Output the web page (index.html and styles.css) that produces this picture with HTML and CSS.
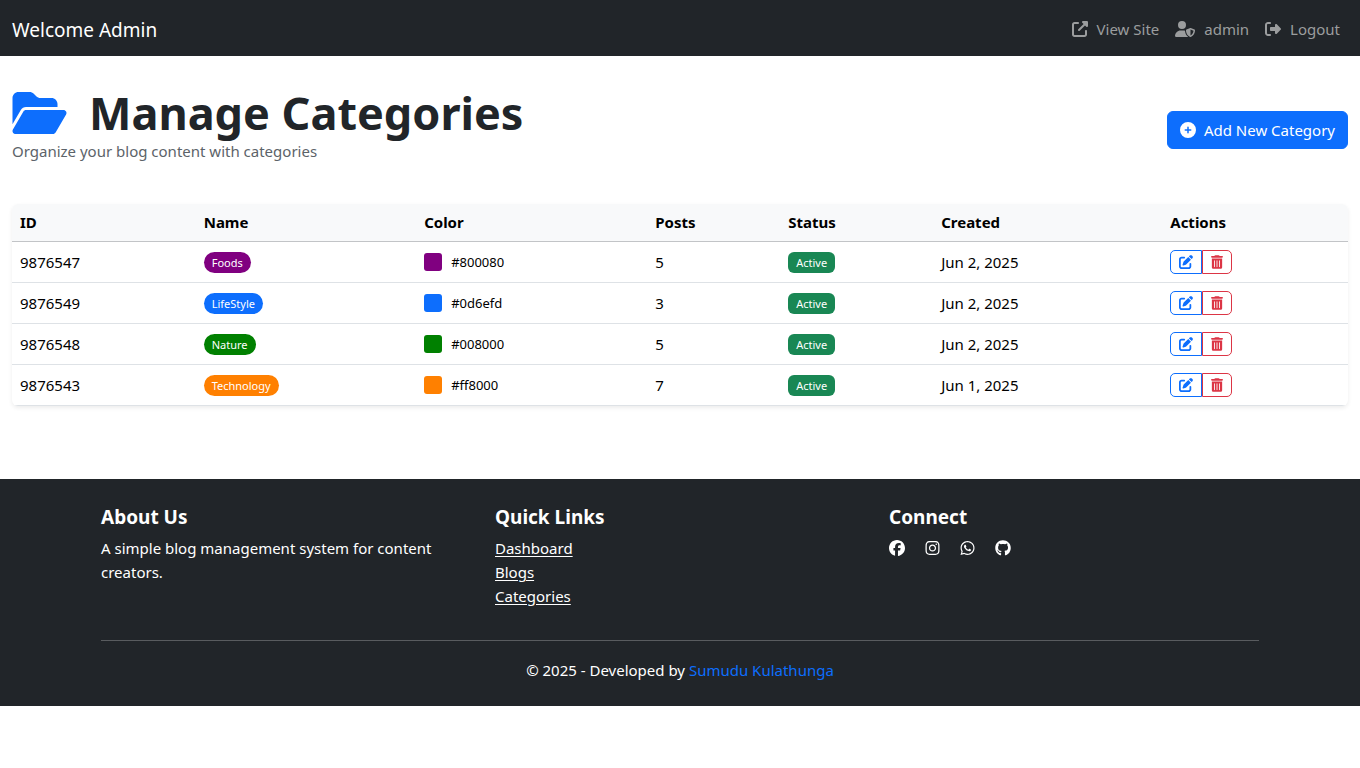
FILE: index.html
```html
<!DOCTYPE html>
<html lang="en">
<head>
<meta charset="utf-8">
<meta name="viewport" content="width=device-width, initial-scale=1">
<title>Manage Categories</title>
<link rel="stylesheet" href="styles.css">
</head>
<body>
<svg class="sprite" aria-hidden="true">
  <symbol id="i-folder" viewBox="0 0 576 512"><path d="M88.7 223.8L0 375.8V96C0 60.7 28.7 32 64 32H181.5c17 0 33.3 6.7 45.3 18.7l26.5 26.5c12 12 28.3 18.7 45.3 18.7H416c35.3 0 64 28.7 64 64v32H144c-22.8 0-43.8 12.1-55.3 31.8zm27.6 16.1C122.1 230 132.6 224 144 224H544c11.5 0 22 6.1 27.7 16.1s5.7 22.2-.1 32.1l-112 192C453.9 474 443.4 480 432 480H32c-11.5 0-22-6.1-27.7-16.1s-5.7-22.2 .1-32.1l112-192z"/></symbol>
  <symbol id="i-external" viewBox="0 0 512 512"><path d="M352 0c-12.9 0-24.6 7.8-29.6 19.8s-2.2 25.7 6.9 34.9L370.7 96 201.4 265.4c-12.5 12.5-12.5 32.8 0 45.3s32.8 12.5 45.3 0L416 141.3l41.4 41.4c9.2 9.2 22.9 11.9 34.9 6.9s19.8-16.6 19.8-29.6V32c0-17.7-14.3-32-32-32H352zM80 32C35.8 32 0 67.8 0 112V432c0 44.2 35.8 80 80 80H400c44.2 0 80-35.8 80-80V320c0-17.7-14.3-32-32-32s-32 14.3-32 32V432c0 8.8-7.2 16-16 16H80c-8.8 0-16-7.2-16-16V112c0-8.8 7.2-16 16-16H192c17.7 0 32-14.3 32-32s-14.3-32-32-32H80z"/></symbol>
  <symbol id="i-user" viewBox="0 0 640 512"><path d="M224 256A128 128 0 1 0 224 0a128 128 0 1 0 0 256zm-45.7 48C79.8 304 0 383.8 0 482.3C0 498.7 13.3 512 29.7 512H418.3c1.8 0 3.5-.2 5.3-.5c-76.3-55.1-99.8-141-103.1-200.2c-16.1-4.8-33.1-7.3-50.7-7.3H178.3zm308.8-78.3l-120 48C358 277.4 352 286.2 352 296c0 63.3 25.9 168.8 134.8 214.2c5.9 2.5 12.6 2.5 18.5 0C614.1 464.8 640 359.3 640 296c0-9.8-6-18.6-15.1-22.3l-120-48c-5.7-2.3-12.1-2.3-17.8 0zM591.4 312c-3.9 50.7-27.2 116.7-95.4 149.7V273.8L591.4 312z"/></symbol>
  <symbol id="i-logout" viewBox="0 0 512 512"><path d="M377.9 105.9L500.7 228.7c7.2 7.2 11.3 17.1 11.3 27.3s-4.1 20.1-11.3 27.3L377.9 406.1c-6.4 6.4-15 9.9-24 9.9c-18.7 0-33.9-15.2-33.9-33.9l0-62.1-128 0c-17.7 0-32-14.3-32-32l0-64c0-17.7 14.3-32 32-32l128 0 0-62.1c0-18.7 15.2-33.9 33.9-33.9c9 0 17.6 3.6 24 9.9zM160 96L96 96c-17.7 0-32 14.3-32 32l0 256c0 17.7 14.3 32 32 32l64 0c17.7 0 32 14.3 32 32s-14.3 32-32 32l-64 0c-53 0-96-43-96-96L0 128C0 75 43 32 96 32l64 0c17.7 0 32 14.3 32 32s-14.3 32-32 32z"/></symbol>
  <symbol id="i-plus" viewBox="0 0 512 512"><path d="M256 512A256 256 0 1 0 256 0a256 256 0 1 0 0 512zM232 344V280H168c-13.3 0-24-10.7-24-24s10.7-24 24-24h64V168c0-13.3 10.7-24 24-24s24 10.7 24 24v64h64c13.3 0 24 10.7 24 24s-10.7 24-24 24H280v64c0 13.3-10.7 24-24 24s-24-10.7-24-24z"/></symbol>
  <symbol id="i-edit" viewBox="0 0 512 512"><path d="M471.6 21.7c-21.9-21.9-57.3-21.9-79.2 0L362.3 51.7l97.9 97.9 30.1-30.1c21.9-21.9 21.9-57.3 0-79.2L471.6 21.7zm-299.2 220c-6.1 6.1-10.8 13.6-13.5 21.9l-29.6 88.8c-2.9 8.6-.6 18.1 5.8 24.6s15.9 8.7 24.6 5.8l88.8-29.6c8.2-2.7 15.7-7.4 21.9-13.5L437.7 172.3 339.7 74.3 172.4 241.7zM96 64C43 64 0 107 0 160V416c0 53 43 96 96 96H352c53 0 96-43 96-96V320c0-17.7-14.3-32-32-32s-32 14.3-32 32v96c0 17.7-14.3 32-32 32H96c-17.7 0-32-14.3-32-32V160c0-17.7 14.3-32 32-32h96c17.7 0 32-14.3 32-32s-14.3-32-32-32H96z"/></symbol>
  <symbol id="i-trash" viewBox="0 0 448 512"><path d="M135.2 17.7C140.6 6.8 151.7 0 163.8 0H284.2c12.1 0 23.2 6.8 28.6 17.7L320 32h96c17.7 0 32 14.3 32 32s-14.3 32-32 32H32C14.3 96 0 81.7 0 64S14.3 32 32 32h96l7.2-14.3zM32 128H416V448c0 35.3-28.7 64-64 64H96c-35.3 0-64-28.7-64-64V128zm96 64c-8.8 0-16 7.2-16 16V432c0 8.8 7.2 16 16 16s16-7.2 16-16V208c0-8.8-7.2-16-16-16zm96 0c-8.8 0-16 7.2-16 16V432c0 8.8 7.2 16 16 16s16-7.2 16-16V208c0-8.8-7.2-16-16-16zm96 0c-8.8 0-16 7.2-16 16V432c0 8.8 7.2 16 16 16s16-7.2 16-16V208c0-8.8-7.2-16-16-16z"/></symbol>
  <symbol id="i-facebook" viewBox="0 0 512 512"><path d="M512 256C512 114.6 397.4 0 256 0S0 114.6 0 256C0 376 82.7 476.8 194.2 504.5V334.2H141.4V256h52.8V222.3c0-87.1 39.4-127.5 125-127.5c16.2 0 44.2 3.2 55.7 6.4V172c-6-.6-16.5-1-29.6-1c-42 0-58.2 15.9-58.2 57.2V256h83.6l-14.4 78.2H287V510.1C413.8 494.8 512 386.9 512 256z"/></symbol>
  <symbol id="i-instagram" viewBox="0 0 448 512"><path d="M224.1 141c-63.6 0-114.9 51.3-114.9 114.9s51.3 114.9 114.9 114.9S339 319.5 339 255.9 287.7 141 224.1 141zm0 189.6c-41.1 0-74.7-33.5-74.7-74.7s33.5-74.7 74.7-74.7 74.7 33.5 74.7 74.7-33.6 74.7-74.7 74.7zm146.4-194.3c0 14.9-12 26.8-26.8 26.8-14.9 0-26.8-12-26.8-26.8s12-26.8 26.8-26.8 26.8 12 26.8 26.8zm76.1 27.2c-1.7-35.9-9.9-67.7-36.2-93.9-26.2-26.2-58-34.4-93.9-36.2-37-2.1-147.9-2.1-184.9 0-35.8 1.7-67.6 9.9-93.9 36.1s-34.4 58-36.2 93.9c-2.1 37-2.1 147.9 0 184.9 1.7 35.9 9.9 67.7 36.2 93.9s58 34.4 93.9 36.2c37 2.1 147.9 2.1 184.9 0 35.9-1.7 67.7-9.9 93.9-36.2 26.2-26.2 34.4-58 36.2-93.9 2.1-37 2.1-147.8 0-184.8zM398.8 388c-7.8 19.6-22.9 34.7-42.6 42.6-29.5 11.7-99.5 9-132.1 9s-102.7 2.6-132.1-9c-19.6-7.8-34.7-22.9-42.6-42.6-11.7-29.5-9-99.5-9-132.1s-2.6-102.7 9-132.1c7.8-19.6 22.9-34.7 42.6-42.6 29.5-11.7 99.5-9 132.1-9s102.7-2.6 132.1 9c19.6 7.8 34.7 22.9 42.6 42.6 11.7 29.5 9 99.5 9 132.1s2.7 102.7-9 132.1z"/></symbol>
  <symbol id="i-whatsapp" viewBox="0 0 448 512"><path d="M380.9 97.1C339 55.1 283.2 32 223.9 32c-122.4 0-222 99.6-222 222 0 39.1 10.2 77.3 29.6 111L0 480l117.7-30.9c32.4 17.7 68.9 27 106.1 27h.1c122.3 0 224.1-99.6 224.1-222 0-59.3-25.2-115-67.1-157zm-157 341.6c-33.2 0-65.7-8.9-94-25.7l-6.7-4-69.8 18.3L72 359.2l-4.4-7c-18.5-29.4-28.2-63.3-28.2-98.2 0-101.7 82.8-184.5 184.6-184.5 49.3 0 95.6 19.2 130.4 54.1 34.8 34.9 56.2 81.2 56.1 130.5 0 101.8-84.9 184.6-186.6 184.6zm101.2-138.2c-5.5-2.8-32.8-16.2-37.9-18-5.1-1.9-8.8-2.8-12.5 2.8-3.7 5.6-14.3 18-17.6 21.8-3.2 3.7-6.5 4.2-12 1.4-32.6-16.3-54-29.1-75.5-66-5.7-9.8 5.7-9.1 16.3-30.3 1.8-3.7.9-6.9-.5-9.7-1.4-2.8-12.5-30.1-17.1-41.2-4.5-10.8-9.1-9.3-12.5-9.5-3.2-.2-6.9-.2-10.6-.2-3.7 0-9.7 1.4-14.8 6.9-5.1 5.6-19.4 19-19.4 46.3 0 27.3 19.9 53.7 22.6 57.4 2.8 3.7 39.1 59.7 94.8 83.8 35.2 15.2 49 16.5 66.6 13.9 10.7-1.6 32.8-13.4 37.4-26.4 4.6-13 4.6-24.1 3.2-26.4-1.3-2.5-5-3.9-10.5-6.6z"/></symbol>
  <symbol id="i-github" viewBox="0 0 496 512"><path d="M244.8 8C106.1 8 0 113.3 0 252c0 110.9 69.8 205.8 169.5 239.2 12.8 2.3 17.3-5.6 17.3-12.1 0-6.2-.3-40.4-.3-61.4 0 0-70 15-84.7-29.8 0 0-11.4-29.1-27.8-36.6 0 0-22.9-15.7 1.6-15.4 0 0 24.9 2 38.6 25.8 21.9 38.6 58.6 27.5 72.9 20.9 2.3-16 8.8-27.1 16-33.7-55.9-6.2-112.3-14.3-112.3-110.5 0-27.5 7.6-41.3 23.6-58.9-2.6-6.5-11.1-33.3 2.6-67.9 20.9-6.5 69 27 69 27 20-5.6 41.5-8.5 62.8-8.5s42.8 2.9 62.8 8.5c0 0 48.1-33.6 69-27 13.7 34.7 5.2 61.4 2.6 67.9 16 17.7 25.8 31.5 25.8 58.9 0 96.5-58.9 104.2-114.8 110.5 9.2 7.9 17 22.9 17 46.4 0 33.7-.3 75.4-.3 83.6 0 6.5 4.6 14.4 17.3 12.1C428.2 457.8 496 362.9 496 252 496 113.3 383.5 8 244.8 8z"/></symbol>
</svg>

<header class="navbar">
  <a class="brand" href="#">Welcome Admin</a>
  <nav class="nav">
    <a class="nav-link" href="#"><svg class="icon"><use href="#i-external"/></svg>View Site</a>
    <a class="nav-link" href="#"><svg class="icon icon-wide"><use href="#i-user"/></svg>admin</a>
    <a class="nav-link" href="#"><svg class="icon"><use href="#i-logout"/></svg>Logout</a>
  </nav>
</header>

<main class="main">
  <div class="page-head">
    <div class="heading">
      <h1 class="title"><svg class="title-icon"><use href="#i-folder"/></svg>Manage Categories</h1>
      <p class="subtitle">Organize your blog content with categories</p>
    </div>
    <button class="btn-primary" type="button"><svg class="icon"><use href="#i-plus"/></svg>Add New Category</button>
  </div>

  <table class="table">
    <colgroup><col class="c-id"><col class="c-name"><col class="c-color"><col class="c-posts"><col class="c-status"><col class="c-created"><col class="c-actions"></colgroup>
    <thead>
      <tr><th scope="col">ID</th><th scope="col">Name</th><th scope="col">Color</th><th scope="col">Posts</th><th scope="col">Status</th><th scope="col">Created</th><th scope="col">Actions</th></tr>
    </thead>
    <tbody>
      <tr class="purple">
        <td>9876547</td><td><span class="badge pill">Foods</span></td>
        <td><div class="color"><span class="swatch"></span>#800080</div></td>
        <td>5</td><td><span class="badge status">Active</span></td><td>Jun 2, 2025</td>
        <td><div class="group"><button class="act edit" type="button" aria-label="Edit Foods"><svg class="icon-sm"><use href="#i-edit"/></svg></button><button class="act delete" type="button" aria-label="Delete Foods"><svg class="icon-sm icon-thin"><use href="#i-trash"/></svg></button></div></td>
      </tr>
      <tr class="blue">
        <td>9876549</td><td><span class="badge pill">LifeStyle</span></td>
        <td><div class="color"><span class="swatch"></span>#0d6efd</div></td>
        <td>3</td><td><span class="badge status">Active</span></td><td>Jun 2, 2025</td>
        <td><div class="group"><button class="act edit" type="button" aria-label="Edit LifeStyle"><svg class="icon-sm"><use href="#i-edit"/></svg></button><button class="act delete" type="button" aria-label="Delete LifeStyle"><svg class="icon-sm icon-thin"><use href="#i-trash"/></svg></button></div></td>
      </tr>
      <tr class="green">
        <td>9876548</td><td><span class="badge pill">Nature</span></td>
        <td><div class="color"><span class="swatch"></span>#008000</div></td>
        <td>5</td><td><span class="badge status">Active</span></td><td>Jun 2, 2025</td>
        <td><div class="group"><button class="act edit" type="button" aria-label="Edit Nature"><svg class="icon-sm"><use href="#i-edit"/></svg></button><button class="act delete" type="button" aria-label="Delete Nature"><svg class="icon-sm icon-thin"><use href="#i-trash"/></svg></button></div></td>
      </tr>
      <tr class="orange">
        <td>9876543</td><td><span class="badge pill">Technology</span></td>
        <td><div class="color"><span class="swatch"></span>#ff8000</div></td>
        <td>7</td><td><span class="badge status">Active</span></td><td>Jun 1, 2025</td>
        <td><div class="group"><button class="act edit" type="button" aria-label="Edit Technology"><svg class="icon-sm"><use href="#i-edit"/></svg></button><button class="act delete" type="button" aria-label="Delete Technology"><svg class="icon-sm icon-thin"><use href="#i-trash"/></svg></button></div></td>
      </tr>
    </tbody>
  </table>
</main>

<footer class="footer">
  <div class="footer-inner">
    <div class="footer-cols">
      <section>
        <h2 class="footer-title">About Us</h2>
        <p class="about">A simple blog management system for content creators.</p>
      </section>
      <section>
        <h2 class="footer-title">Quick Links</h2>
        <ul class="links">
          <li><a href="#">Dashboard</a></li>
          <li><a href="#">Blogs</a></li>
          <li><a href="#">Categories</a></li>
        </ul>
      </section>
      <section>
        <h2 class="footer-title">Connect</h2>
        <div class="social">
          <a href="#" aria-label="Facebook"><svg class="icon"><use href="#i-facebook"/></svg></a>
          <a href="#" aria-label="Instagram"><svg class="icon icon-thin"><use href="#i-instagram"/></svg></a>
          <a href="#" aria-label="WhatsApp"><svg class="icon icon-thin"><use href="#i-whatsapp"/></svg></a>
          <a href="#" aria-label="GitHub"><svg class="icon"><use href="#i-github"/></svg></a>
        </div>
      </section>
    </div>
    <p class="copyright">© 2025 - Developed by <a href="#">Sumudu Kulathunga</a></p>
  </div>
</footer>
</body>
</html>
```
FILE: styles.css
```css
* { box-sizing: border-box; }

body {
  margin: 0;
  background: #fff;
  color: #212529;
  font-family: "Segoe UI", "Noto Sans", "Open Sans", sans-serif;
  font-size: 15px;
  line-height: 24px;
}

h1, h2, p, ul { margin: 0; }

button { font: inherit; cursor: pointer; }

.sprite { position: absolute; width: 0; height: 0; }

.icon, .icon-sm, .title-icon { fill: currentColor; flex: none; }
.icon { width: 16px; height: 16px; }
.icon-wide { width: 20px; }
.icon-sm { width: 14px; height: 14px; }
.icon.icon-thin { width: 15px; }
.icon-sm.icon-thin { width: 12px; }

.navbar {
  display: flex;
  align-items: center;
  justify-content: space-between;
  min-height: 56px;
  padding: 2px 20px 0 12px;
  background: #212529;
}
.brand { padding-top: 2px; color: #fff; font-size: 19px; text-decoration: none; }
.nav { display: flex; gap: 16px; }
.nav-link {
  display: flex;
  align-items: center;
  gap: 9px;
  color: #9b9d9e;
  text-decoration: none;
}

.main { padding: 24px 12px 73px; }

.page-head {
  display: flex;
  align-items: center;
  justify-content: space-between;
  min-height: 100px;
  margin-bottom: 24px;
}
.heading { padding: 6px 0 17px; }
.title {
  display: flex;
  align-items: center;
  gap: 22px;
  font-size: 45px;
  font-weight: 700;
  line-height: 53px;
}
.title-icon { width: 55px; height: 48px; color: #0d6efd; }
.subtitle { color: #5c6369; }

.btn-primary {
  display: flex;
  align-items: center;
  gap: 8px;
  padding: 6px 12px;
  border: 1px solid #0d6efd;
  border-radius: 6px;
  background: #0d6efd;
  color: #fff;
}

.table {
  width: 100%;
  table-layout: fixed;
  border-spacing: 0;
  border-radius: 6px;
  overflow: hidden;
  color: #000;
  box-shadow: 0 2px 4px rgba(0, 0, 0, .075);
}
.c-id { width: 13.75%; }
.c-name { width: 16.5%; }
.c-color { width: 17.3%; }
.c-posts { width: 9.95%; }
.c-status { width: 11.45%; }
.c-created { width: 17.15%; }
.c-actions { width: 13.9%; }
.table th {
  padding: 6px 8px 7px;
  border-bottom: 1px solid #c2c4c7;
  background: #f8f9fa;
  font-weight: 700;
  text-align: left;
}
.table td {
  padding: 8px;
  border-bottom: 1px solid #dee2e6;
  vertical-align: middle;
}

.purple { --tag: #800080; }
.blue { --tag: #0d6efd; }
.green { --tag: #008000; }
.orange { --tag: #ff8000; }

.badge {
  display: block;
  width: fit-content;
  padding: 0 8px;
  color: #fff;
  font-size: 11px;
  line-height: 21px;
}
.pill { border-radius: 11px; background: var(--tag); }
.status { border-radius: 6px; background: #198754; }

.color { display: flex; align-items: center; gap: 9px; font-size: 13px; }
.swatch { width: 18px; height: 18px; border-radius: 3px; background: var(--tag); }

.group { display: flex; }
.act {
  display: flex;
  align-items: center;
  justify-content: center;
  height: 24px;
  padding: 0 8px;
  border: 1px solid currentColor;
  background: transparent;
}
.edit { color: #0d6efd; border-radius: 5px 0 0 5px; }
.delete { color: #dc3545; border-radius: 0 5px 5px 0; }

.footer { padding: 26px 24px 24px; background: #212529; color: #fff; }
.footer-inner { max-width: 1158px; margin: 0 auto; }
.footer-cols {
  display: grid;
  grid-template-columns: repeat(3, 1fr);
  gap: 24px;
  padding-bottom: 32px;
  border-bottom: 1px solid #595c5f;
}
.footer-title {
  margin-bottom: 6px;
  font-size: 19px;
  font-weight: 700;
  line-height: 25px;
}
.links { padding: 0; list-style: none; }
.links a { color: #fff; text-underline-offset: 2px; }
.social { display: flex; gap: 20px; padding-top: 4px; }
.social a { display: flex; color: #fff; }
.copyright { padding-top: 17px; text-align: center; }
.copyright a { color: #0d6efd; text-decoration: none; }
```
